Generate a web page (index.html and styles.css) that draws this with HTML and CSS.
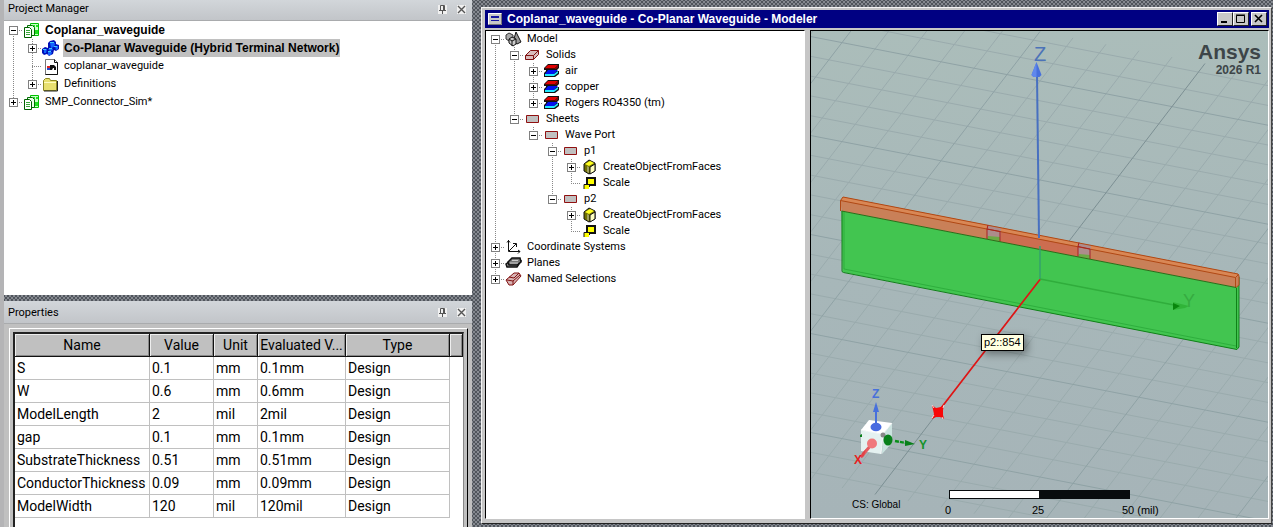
FILE: index.html
```html
<!DOCTYPE html>
<html lang="en">
<head>
<meta charset="utf-8">
<title>Coplanar_waveguide - Modeler</title>
<link rel="stylesheet" href="styles.css">
</head>
<body>
<svg class="defs" aria-hidden="true">
  <symbol id="i-project" viewBox="0 0 17 17">
    <path d="M7.500 1.500h8v12h-8z" fill="#c8ffc8" stroke="#00c000"/><path d="M10 3h2v3h-2zM13 3h2v2h-2zM12 8h3v4h-3z" fill="#22e022"/>
    <path d="M4.500 3.500h5l2 2v8h-7z" fill="#e8ffe8" stroke="#007000"/>
    <path d="M1.500 5.500h5l2 2v8h-7z" fill="#fff" stroke="#006000"/><path d="M3 8.500h4M3 10.500h4M3 12.500h4" stroke="#38a838"/>
  </symbol>
  <symbol id="i-design" viewBox="0 0 17 17">
    <path d="M8 1l4-1 2 2v2l3 1v4l-3 2-2-1-1 4-4 2-2-2-3 1-2-2V9l3-2 3 1V3z" fill="#0010b8"/>
    <path d="M8 3l4-1 1 2-1 3-3 1zM13 6l3 0v3l-2 1zM6 9l4-1 1 2-3 1zM2 9l3 0-1 4-2 0zM6 12l4 0-1 3-3 0z" fill="#1464ff"/>
    <path d="M8 2.500h4M1 9.500h3M6 11.500h3M12 6.500h3M7 8.500h3" stroke="#40c8ff"/>
  </symbol>
  <symbol id="i-file" viewBox="0 0 17 17">
    <path d="M3.500 1.500h9l3 3v12h-12z" fill="#fff" stroke="#777"/><path d="M12.500 1.500v3h3M15.500 4.500v12h-12" fill="none" stroke="#111"/>
    <path d="M5 8h3v2H5z" fill="#d22"/><path d="M5 10h3v2H5z" fill="#24c"/><path d="M8 7h4l2 2v3h-2v-2h-1l-1 2H8z" fill="#111"/>
  </symbol>
  <symbol id="i-folder" viewBox="0 0 17 17">
    <path d="M1.500 4.500l2-2h4l1 2h6v10h-13z" fill="#e8e070" stroke="#8c8820"/><path d="M2 6.500h12" stroke="#fffcc0"/><path d="M2 15h13.500V5" fill="none" stroke="#222"/>
  </symbol>
  <symbol id="i-model" viewBox="0 0 17 16">
    <path d="M11 1l5 10-4 2-4-2z" fill="#999" stroke="#111"/><path d="M1 4l3-2 4 2v4l-4 2-3-2z" fill="#aaa" stroke="#333"/>
    <path d="M4 8l3-2 4 2v5l-3 2-4-3z" fill="#ccc" stroke="#111"/><path d="M4 8l3 2 4-2M7 10v5" fill="none" stroke="#111"/>
  </symbol>
  <symbol id="i-solid" viewBox="0 0 17 16">
    <path d="M1.500 8.500l5-5h8v4l-5 5h-8z" fill="#d8bcbc" stroke="#801010"/><path d="M1.500 8.500h8l5-5M9.500 8.500v4" fill="none" stroke="#801010"/>
  </symbol>
  <symbol id="i-material" viewBox="0 0 17 16">
    <path d="M5 1h11v4l-2 2v1h2v3l-4 3H1v-4l2-2V7H1V5z" fill="#111"/><path d="M5 2h10l-3 3H2z" fill="#e00000"/><path d="M2 5.500h10l3-3v2L13 6H2z" fill="#900000"/>
    <path d="M5 7h10l-4 4H2z" fill="#0010f0"/><path d="M2 11h9l4-3v2l-4 3H2z" fill="#20e8ff"/>
  </symbol>
  <symbol id="i-sheet" viewBox="0 0 17 16"><path d="M2.500 4.500h12v7h-12z" fill="#c0c0c0" stroke="#901010"/></symbol>
  <symbol id="i-create" viewBox="0 0 17 16">
    <path d="M3 5l5-4 6 3v8l-6 3-5-3z" fill="#707000" stroke="#111"/><path d="M4 5l5-3 4 2-5 3z" fill="#ffff20"/>
    <path d="M9 8l5-3v7l-5 3z" fill="#ffffc0" stroke="#111"/><path d="M6 7l2 1v6l-2-1z" fill="#a0a060"/>
  </symbol>
  <symbol id="i-scale" viewBox="0 0 17 16"><path d="M6 3h8v7H6z" fill="#ffff00" stroke="#111" stroke-width="2"/><path d="M3 9h5v5H3z" fill="#ff0"/><path d="M3 14V9.500h5.500V12" fill="none" stroke="#111"/></symbol>
  <symbol id="i-axes" viewBox="0 0 17 16"><path d="M3.500 1v11.500H15M2 3.500l1.500-2 1.500 2M13 11l2 1.500-2 2M4 12l7-7M8 4.500h3.500V8" fill="none" stroke="#111"/></symbol>
  <symbol id="i-planes" viewBox="0 0 17 16">
    <path d="M1 9l4-3h11l-4 6H2z" fill="#888" stroke="#111" stroke-width="1.500"/><path d="M3 7l4-4h8l1 4-4 3H4z" fill="#777" stroke="#111" stroke-width="1.500"/><path d="M5 8h8M7 5.500h6" stroke="#ccc"/>
  </symbol>
  <symbol id="i-named" viewBox="0 0 17 16">
    <path d="M1 9l8-7h5l2 3-8 9H4z" fill="#d8b4b4" stroke="#801010"/><path d="M2 9l6 1 7-6M8 10v4M4 6l5 1 5-5" fill="none" stroke="#801010"/>
  </symbol>
  <symbol id="i-pin" viewBox="0 0 9 9"><path d="M2.500 5.500v-5h4v5M1 5.500h7M4.500 5.500V9M5.500 1v4" fill="none" stroke="#555"/></symbol>
  <symbol id="i-close" viewBox="0 0 9 9"><path d="M1 1l7 7M8 1L1 8" stroke="#555" stroke-width="1.400"/></symbol>
</svg>

<main class="app">
  <div class="side">
    <section class="panel project">
      <header class="panel-head"><h2>Project Manager</h2><button class="tool" aria-label="Pin"><svg><use href="#i-pin"/></svg></button><button class="tool" aria-label="Close"><svg><use href="#i-close"/></svg></button></header>
      <ul class="tree wide">
        <li><i class="c start"><button class="box" aria-label="Collapse"></button></i><svg><use href="#i-project"/></svg><b>Coplanar_waveguide</b></li>
        <li><i class="c v"></i><i class="c mid"><button class="box plus" aria-label="Expand"></button></i><svg><use href="#i-design"/></svg><b class="selected">Co-Planar Waveguide (Hybrid Terminal Network)</b></li>
        <li><i class="c v"></i><i class="c mid"></i><svg><use href="#i-file"/></svg><span>coplanar_waveguide</span></li>
        <li><i class="c v"></i><i class="c end"><button class="box plus" aria-label="Expand"></button></i><svg><use href="#i-folder"/></svg><span>Definitions</span></li>
        <li><i class="c end"><button class="box plus" aria-label="Expand"></button></i><svg><use href="#i-project"/></svg><span>SMP_Connector_Sim*</span></li>
      </ul>
    </section>
    <section class="panel props">
      <header class="panel-head"><h2>Properties</h2><button class="tool" aria-label="Pin"><svg><use href="#i-pin"/></svg></button><button class="tool" aria-label="Close"><svg><use href="#i-close"/></svg></button></header>
      <div class="frame"><div class="well">
        <table>
          <colgroup><col class="name"><col class="value"><col class="unit"><col class="eval"><col class="type"><col></colgroup>
          <thead><tr><th>Name</th><th>Value</th><th>Unit</th><th>Evaluated V...</th><th>Type</th><th></th></tr></thead>
          <tbody>
            <tr><td>S</td><td>0.1</td><td>mm</td><td>0.1mm</td><td>Design</td></tr>
            <tr><td>W</td><td>0.6</td><td>mm</td><td>0.6mm</td><td>Design</td></tr>
            <tr><td>ModelLength</td><td>2</td><td>mil</td><td>2mil</td><td>Design</td></tr>
            <tr><td>gap</td><td>0.1</td><td>mm</td><td>0.1mm</td><td>Design</td></tr>
            <tr><td>SubstrateThickness</td><td>0.51</td><td>mm</td><td>0.51mm</td><td>Design</td></tr>
            <tr><td>ConductorThickness</td><td>0.09</td><td>mm</td><td>0.09mm</td><td>Design</td></tr>
            <tr><td>ModelWidth</td><td>120</td><td>mil</td><td>120mil</td><td>Design</td></tr>
          </tbody>
        </table>
      </div></div>
    </section>
  </div>

  <section class="window">
    <header class="titlebar">
      <svg class="sys" viewBox="0 0 14 12"><path d="M0 0h14v12H0z" fill="#c8c8c8"/><path d="M.5 11.500V.5h13" fill="none" stroke="#fff"/><path d="M.5 11.500h13V.5" fill="none" stroke="#777"/><path d="M3 3h8v2H3zM3 7h8v1H3z" fill="#1818a0"/></svg>
      <h1>Coplanar_waveguide - Co-Planar Waveguide - Modeler</h1>
      <button class="wb" aria-label="Minimize"><svg viewBox="0 0 12 10"><path d="M2 8h6" stroke="#000" stroke-width="2"/></svg></button>
      <button class="wb" aria-label="Maximize"><svg viewBox="0 0 12 10"><path d="M1.500 1.500h8v7h-8zM1 1h9" fill="none" stroke="#000"/></svg></button>
      <button class="wb last" aria-label="Close window"><svg viewBox="0 0 12 10"><path d="M2 1l7 7M9 1L2 8" stroke="#000" stroke-width="1.600"/></svg></button>
    </header>
    <div class="work">
      <ul class="tree">
        <li><i class="c start"><button class="box" aria-label="Collapse"></button></i><svg><use href="#i-model"/></svg><span>Model</span></li>
        <li><i class="c v"></i><i class="c mid"><button class="box" aria-label="Collapse"></button></i><svg><use href="#i-solid"/></svg><span>Solids</span></li>
        <li><i class="c v"></i><i class="c v"></i><i class="c mid"><button class="box plus" aria-label="Expand"></button></i><svg><use href="#i-material"/></svg><span>air</span></li>
        <li><i class="c v"></i><i class="c v"></i><i class="c mid"><button class="box plus" aria-label="Expand"></button></i><svg><use href="#i-material"/></svg><span>copper</span></li>
        <li><i class="c v"></i><i class="c v"></i><i class="c end"><button class="box plus" aria-label="Expand"></button></i><svg><use href="#i-material"/></svg><span>Rogers RO4350 (tm)</span></li>
        <li><i class="c v"></i><i class="c end"><button class="box" aria-label="Collapse"></button></i><svg><use href="#i-sheet"/></svg><span>Sheets</span></li>
        <li><i class="c v"></i><i class="c"></i><i class="c end"><button class="box" aria-label="Collapse"></button></i><svg><use href="#i-sheet"/></svg><span>Wave Port</span></li>
        <li><i class="c v"></i><i class="c"></i><i class="c"></i><i class="c mid"><button class="box" aria-label="Collapse"></button></i><svg><use href="#i-sheet"/></svg><span>p1</span></li>
        <li><i class="c v"></i><i class="c"></i><i class="c"></i><i class="c v"></i><i class="c mid"><button class="box plus" aria-label="Expand"></button></i><svg><use href="#i-create"/></svg><span>CreateObjectFromFaces</span></li>
        <li><i class="c v"></i><i class="c"></i><i class="c"></i><i class="c v"></i><i class="c end"></i><svg><use href="#i-scale"/></svg><span>Scale</span></li>
        <li><i class="c v"></i><i class="c"></i><i class="c"></i><i class="c end"><button class="box" aria-label="Collapse"></button></i><svg><use href="#i-sheet"/></svg><span>p2</span></li>
        <li><i class="c v"></i><i class="c"></i><i class="c"></i><i class="c"></i><i class="c mid"><button class="box plus" aria-label="Expand"></button></i><svg><use href="#i-create"/></svg><span>CreateObjectFromFaces</span></li>
        <li><i class="c v"></i><i class="c"></i><i class="c"></i><i class="c"></i><i class="c end"></i><svg><use href="#i-scale"/></svg><span>Scale</span></li>
        <li><i class="c mid"><button class="box plus" aria-label="Expand"></button></i><svg><use href="#i-axes"/></svg><span>Coordinate Systems</span></li>
        <li><i class="c mid"><button class="box plus" aria-label="Expand"></button></i><svg><use href="#i-planes"/></svg><span>Planes</span></li>
        <li><i class="c end"><button class="box plus" aria-label="Expand"></button></i><svg><use href="#i-named"/></svg><span>Named Selections</span></li>
      </ul>
      <div class="view">
        <svg class="scene" viewBox="811 31 457 487" preserveAspectRatio="xMidYMid slice" role="img" aria-label="Coplanar waveguide model">
          <!-- ground grid: one unit per cell, origin at the coordinate system -->
          <g transform="matrix(33 6.400 -13.200 17.240 1040 279)" fill="none">
            <path class="minor" d="M-20-12H20M-20-11H20M-20-9H20M-20-8H20M-20-7H20M-20-6H20M-20-4H20M-20-3H20M-20-2H20M-20-1H20M-20 1H20M-20 2H20M-20 3H20M-20 4H20M-20 6H20M-20 7H20M-20 8H20M-20 9H20M-20 11H20M-20 12H20"/>
            <path class="minor" d="M-12-12.500v25M-11-12.500v25M-9-12.500v25M-8-12.500v25M-7-12.500v25M-6-12.500v25M-4-12.500v25M-3-12.500v25M-2-12.500v25M-1-12.500v25M1-12.500v25M2-12.500v25M3-12.500v25M4-12.500v25M6-12.500v25M7-12.500v25M8-12.500v25M9-12.500v25M11-12.500v25M12-12.500v25"/>
            <path class="major" d="M-20-10H20M-20-5H20M-20 0H20M-20 5H20M-20 10H20M-10-12.500v25M-5-12.500v25M5-12.500v25M10-12.500v25"/>
            <path class="axis" d="M0-12.500v25"/>
          </g>
          <!-- substrate -->
          <path d="M841.500 211L1236 287.500l3-11v71l-2.500 2L842.500 272z" fill="#42c550"/>
          <path d="M842 211v60.500l1.500 1L1237 349.500l2-2.500v-70M1236.500 288v60" fill="none" stroke="#108018"/>
          <path d="M844 212v57L1236 346" fill="none" stroke="#25a535" stroke-width=".7"/>
          <!-- conductor -->
          <path d="M840.500 200.500L843 197l395 77 1 2v9l-3 2.500L841.500 211z" fill="#c98058"/>
          <path d="M843 197l395 77-2.500 3.500-395-77z" fill="#d98755"/>
          <path d="M1000 231.400l78 15.200v10.200l-78-15.100z" fill="#cc6d50"/>
          <path d="M987 229l1-4 13 2.600-1 14.100-13-2.500zM1078 246.600l1-3.600 12 2-1 14-12-2.200z" fill="#ad8c8c"/>
          <path d="M988 236l12 1v4.700l-13-2.500zM1079 254l11 1v4l-12-2.200z" fill="#6caa45"/>
          <path d="M840.500 211v-10.500L843 197l395 77 1 2v9l-3 2.500M840.500 200.500l395 77v10M1235.500 277.500l3-3" fill="none" stroke="#b04814"/>
          <path d="M987 239v-10l1-4M1000 241.500v-10.500M1078 256.500v-10l1-4M1090 259v-10M987 229l13 2.500M1078 246.500l12 2.500" fill="none" stroke="#a82020"/>
          <path d="M841.500 211L1236 287.500" stroke="#287018"/>
          <!-- axes -->
          <path d="M1037 75l2 163" stroke="#4870c0" stroke-width="2"/><path d="M1040 246v33" stroke="#35a06c" stroke-width="1.500"/>
          <path d="M1036.500 62l5 13-2 2h-6l-2-2z" fill="#4770dc"/><path d="M1036.500 62v15h-3l-2-2z" fill="#6088ec"/>
          <text x="1034" y="61" class="z">Z</text>
          <path d="M1040 279l134 26" stroke="#30ad3c" stroke-width="1.500"/><path d="M1173 302l16 4-4 2-12 2z" fill="#30b438"/><path d="M1173 303l7 3-7 4z" fill="#08860c"/>
          <text x="1183" y="307" class="y">Y</text>
          <path d="M1040 279.500L938 412" stroke="#e01414" stroke-width="1.700"/>
          <path d="M932 405l4 3 5-1 3-2-1 5v5l1 4-4-2h-4l-4 2 2-5z" fill="#f80808"/><path d="M932 405l2 3M944 405l-1 3M932 418l2-3M943 419l-1-2" stroke="#fff" stroke-width=".8"/>
          <!-- orientation cube -->
          <path d="M861 430l8-10 23 3-9 11z" fill="#fff"/><path d="M861 430l22 4-2 20-20-3z" fill="#e4f1f0"/><path d="M883 434l9-11v20l-10 11z" fill="#cbe2df"/>
          <path d="M861 430l22 4 9-11M883 434l-2 20" fill="none" stroke="#fff" stroke-width=".8"/>
          <path d="M876 425v-14" stroke="#4770dc" stroke-width="2"/><path d="M876 402l3 10h-6z" fill="#4770dc"/><ellipse cx="876" cy="427" rx="5.500" ry="4.300" fill="#496be0"/>
          <circle cx="883" cy="435" r="2.500" fill="#888"/><path d="M860 435l2-1v3h-2z" fill="#08801a"/>
          <ellipse cx="888" cy="440" rx="4.500" ry="5.500" fill="#08801a"/><path d="M895 441l11 2" stroke="#08901a" stroke-width="2.500" stroke-dasharray="4 1"/><path d="M905 440l10 4-10 2z" fill="#08801a"/>
          <path d="M871 445l-10 12" stroke="#e45c60" stroke-width="3"/><circle cx="872" cy="443.500" r="5" fill="#f0797c"/><path d="M866 449l-2 7-3 2 1-5z" fill="#e04448"/>
          <text x="872" y="398" class="tag blue">Z</text><text x="919" y="449" class="tag green">Y</text><text x="854" y="464" class="tag red">X</text>
        </svg>
        <div class="brand"><strong>Ansys</strong><span>2026 R1</span></div>
        <div class="cs">CS: Global</div>
        <div class="scale"><div class="bar"></div><div class="ticks"><span>0</span><span>25</span><span>50 (mil)</span></div></div>
        <div class="tip" role="tooltip">p2::854</div>
      </div>
    </div>
  </section>
</main>
</body>
</html>
```
FILE: styles.css
```css
* { box-sizing: border-box; }
body {
  margin: 0;
  font: 11px/16px "Liberation Sans", Arial, sans-serif;
  color: #000;
}
h1, h2, ul { margin: 0; padding: 0; }
button { padding: 0; border: 0; }
.defs { position: absolute; width: 0; height: 0; }

.app {
  display: grid;
  grid-template-columns: 472px minmax(0, 1fr);
  gap: 9px;
  height: 100vh;
  overflow: hidden;
  background-color: #858990;
  background-image: radial-gradient(circle, #50555c 1px, transparent 1px), radial-gradient(circle, #50555c 1px, transparent 1px);
  background-size: 4px 4px;
  background-position: 0 0, 2px 2px;
}

/* docked panels */
.side {
  display: grid;
  grid-template-rows: 295fr 226fr;
  gap: 6px;
  min-height: 0;
  border-left: 4px solid #b4b4b6;
}
.panel { display: flex; flex-direction: column; min-height: 0; overflow: hidden; }
.project { background: #fff; }
.props { background: #c0c0c0; }
.panel-head {
  display: flex;
  align-items: center;
  flex: none;
  gap: 10px;
  height: 21px;
  padding: 0 6px 2px 4px;
  background: linear-gradient(#d2d6da, #c2c5c9);
  border-bottom: 1px solid #a9abad;
}
.props .panel-head { height: 23px; padding: 1px 6px 0 4px; }
.panel-head h2 { flex: 1; font: 11px/16px Roboto, sans-serif; }
.tool { width: 9px; height: 9px; background: #f0f0f0; }
.tool svg { display: block; width: 9px; height: 9px; }

/* trees */
.tree { list-style: none; background: #fff; font-family: Roboto, sans-serif; }
.tree b { font-family: "Liberation Sans", Arial, sans-serif; }
.tree li { display: flex; align-items: center; height: 16px; white-space: nowrap; }
.tree li > svg { flex: none; width: 17px; height: 16px; margin-right: 5px; }
.wide { font-size: 12px; }
.wide li { height: 18px; }
.wide li > svg { height: 17px; margin-right: 4px; }
.wide li > span { font-size: 11px; padding-left: 1px; }
.wide b { padding: 0 1px; line-height: 18px; }
.selected { background: #c0c0c0; }
.c { position: relative; display: grid; place-items: center; flex: none; align-self: stretch; width: 19px; }
.c::before {
  content: "";
  position: absolute;
  left: 9px;
  width: 1px;
}
.v::before, .mid::before, .start::before, .end::before { background: repeating-linear-gradient(#888 0 1px, transparent 1px 2px); }
.v::before, .mid::before { top: 0; bottom: 0; }
.start::before { top: 50%; bottom: 0; }
.end::before { top: 0; bottom: 50%; }
.start::after, .mid::after, .end::after {
  content: "";
  position: absolute;
  top: 50%;
  left: 9px;
  right: 0;
  height: 1px;
  background: repeating-linear-gradient(90deg, #888 0 1px, transparent 1px 2px);
}
.box {
  z-index: 1;
  width: 9px;
  height: 9px;
  border: 1px solid #808080;
  background: linear-gradient(#000, #000) center / 5px 1px no-repeat #fff;
}
.box.plus {
  background: linear-gradient(#000, #000) center / 5px 1px no-repeat, linear-gradient(#000, #000) center / 1px 5px no-repeat #fff;
}

/* property grid */
.frame {
  flex: 1;
  min-height: 0;
  margin: 4px 4px 0 5px;
  padding: 3px 3px 0;
  border: solid #fff;
  border-width: 1px 1px 0;
  border-right-color: #000;
}
.well {
  height: 100%;
  overflow: hidden;
  background: #fff;
  border: solid #222;
  border-width: 2px 1px 0 2px;
  border-right-color: #888;
}
table { width: 100%; table-layout: fixed; border-collapse: separate; border-spacing: 0; font: 14px/18px Roboto, sans-serif; }
.name { width: 135px; }
.value { width: 64px; }
.unit { width: 44px; }
.eval { width: 88px; }
.type { width: 104px; }
th, td { height: 23px; padding: 0 2px; white-space: nowrap; overflow: hidden; text-align: left; }
th {
  font-weight: 400;
  text-align: center;
  padding: 0;
  background: #c0c0c0;
  border: solid #111;
  border-width: 0 1px 1px 0;
  box-shadow: inset 1px 1px #eee, inset -1px -1px #888;
}
td { border: solid #c0c0c0; border-width: 0 1px 1px 0; }

/* modeler window */
.window {
  display: flex;
  flex-direction: column;
  margin: 7px 1px 3px 0;
  min-height: 0;
  padding: 2px 2px 4px 3px;
  background: #c6c6c6;
  border: 1px solid #f4f4f4;
  border-right-color: #444;
  border-bottom-color: #222;
}
.titlebar {
  display: flex;
  align-items: center;
  flex: none;
  height: 18px;
  padding: 0 2px 0 3px;
  color: #fff;
  background: #000082;
}
.titlebar h1 { flex: 1; font-size: 12px; line-height: 18px; white-space: nowrap; }
.sys { width: 14px; height: 12px; margin-right: 5px; }
.wb {
  width: 16px;
  height: 14px;
  background: #c8c8c8;
  border: 1px solid #fff;
  border-right-color: #222;
  border-bottom-color: #222;
}
.wb svg { display: block; width: 12px; height: 10px; margin: 1px; }
.wb.last { margin-left: 2px; }
.work { display: grid; grid-template-columns: 320px minmax(0, 1fr); gap: 5px; flex: 1; min-height: 0; margin-top: 2px; }
.work > * { border: 1px solid #000; border-right-color: #fff; border-bottom-color: #fff; min-height: 0; overflow: hidden; }

.view { position: relative; background: linear-gradient(#abbdba, #a7b7b9 50%, #a6b4b8); }
.scene { display: block; width: 100%; height: 100%; }
.minor, .major, .axis { vector-effect: non-scaling-stroke; stroke-width: 1px; }
.minor { stroke: #9aabad; }
.major { stroke: #8fa2a5; }
.axis { stroke: #7c8f93; }
.scene text { font-family: "Liberation Sans", Arial, sans-serif; }
.z { font-size: 20px; fill: #4c73b8; }
.y { font-size: 18px; fill: #36ab40; }
.tag { font-size: 12px; font-weight: 700; }
.blue { fill: #4770dc; }
.green { fill: #15922a; }
.red { fill: #e82020; }
.brand { position: absolute; top: 10px; right: 7px; text-align: right; font-weight: 700; color: #3d4548; }
.brand strong, .brand span { display: block; }
.brand strong { font-size: 21px; line-height: 22px; }
.brand span { font-size: 12px; line-height: 14px; }
.cs { position: absolute; left: 41px; bottom: 5px; font-size: 10px; }
.scale { position: absolute; right: 109px; bottom: 0; width: 210px; }
.bar { width: 181px; height: 9px; border: 1px solid #080c0e; background: linear-gradient(90deg, #fff 50%, #080c0e 50%); }
.ticks { display: grid; grid-template-columns: 87px 90px auto; margin-top: 3px; margin-left: -4px; }
.tip {
  position: absolute;
  left: 170px;
  top: 303px;
  padding: 0 2px;
  border: 1px solid #000;
  background: #ffffe1;
  line-height: 15px;
  box-shadow: 3px 3px 8px #0006;
}
```
